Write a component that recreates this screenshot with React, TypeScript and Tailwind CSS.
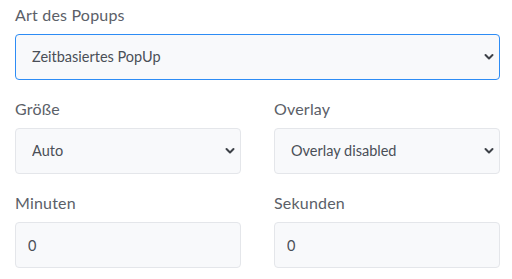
const font = { fontFamily: "Lato, 'Open Sans', sans-serif" };

const Chevron = () => (
  <svg
    className="pointer-events-none absolute right-[6px] top-1/2 -translate-y-1/2"
    width="10"
    height="7"
    viewBox="0 0 10 7"
    fill="none"
  >
    <path d="M1.5 1.5L5 5L8.5 1.5" stroke="#3d4147" strokeWidth="2" strokeLinecap="round" strokeLinejoin="round" />
  </svg>
);

const Field = ({ label, children }: { label: string; children: React.ReactNode }) => (
  <div className="flex flex-col">
    <label className="text-[16px] tracking-[0.2px] leading-[22px] text-[#5b6068] mb-[8px]">{label}</label>
    {children}
  </div>
);

const Select = ({ value, active }: { value: string; active?: boolean }) => (
  <div className="relative">
    <select
      defaultValue={value}
      className={`w-full h-[46px] appearance-none rounded-[4px] border bg-[#f8f9fb] pl-[16px] pr-8 text-[14.5px] text-[#4a4f57] outline-none ${
        active ? "border-[#2d8cf5]" : "border-[#e4e6ea]"
      }`}
      style={font}
    >
      <option>{value}</option>
    </select>
    <Chevron />
  </div>
);

const Input = ({ value }: { value: string }) => (
  <input
    defaultValue={value}
    className="w-full h-[46px] rounded-[4px] border border-[#e4e6ea] bg-[#f8f9fb] px-[12px] text-[14.5px] text-[#4a4f57] outline-none"
    style={font}
  />
);

export default function App() {
  return (
    <div className="w-[512px] h-[279px] bg-white px-[15px] pt-[4px] pr-[12px]" style={font}>
      <Field label="Art des Popups">
        <Select value="Zeitbasiertes PopUp" active />
      </Field>
      <div className="grid grid-cols-2 gap-x-[33px] mt-[18px]">
        <Field label="Größe">
          <Select value="Auto" />
        </Field>
        <Field label="Overlay">
          <Select value="Overlay disabled" />
        </Field>
      </div>
      <div className="grid grid-cols-2 gap-x-[33px] mt-[18px]">
        <Field label="Minuten">
          <Input value="0" />
        </Field>
        <Field label="Sekunden">
          <Input value="0" />
        </Field>
      </div>
    </div>
  );
}
